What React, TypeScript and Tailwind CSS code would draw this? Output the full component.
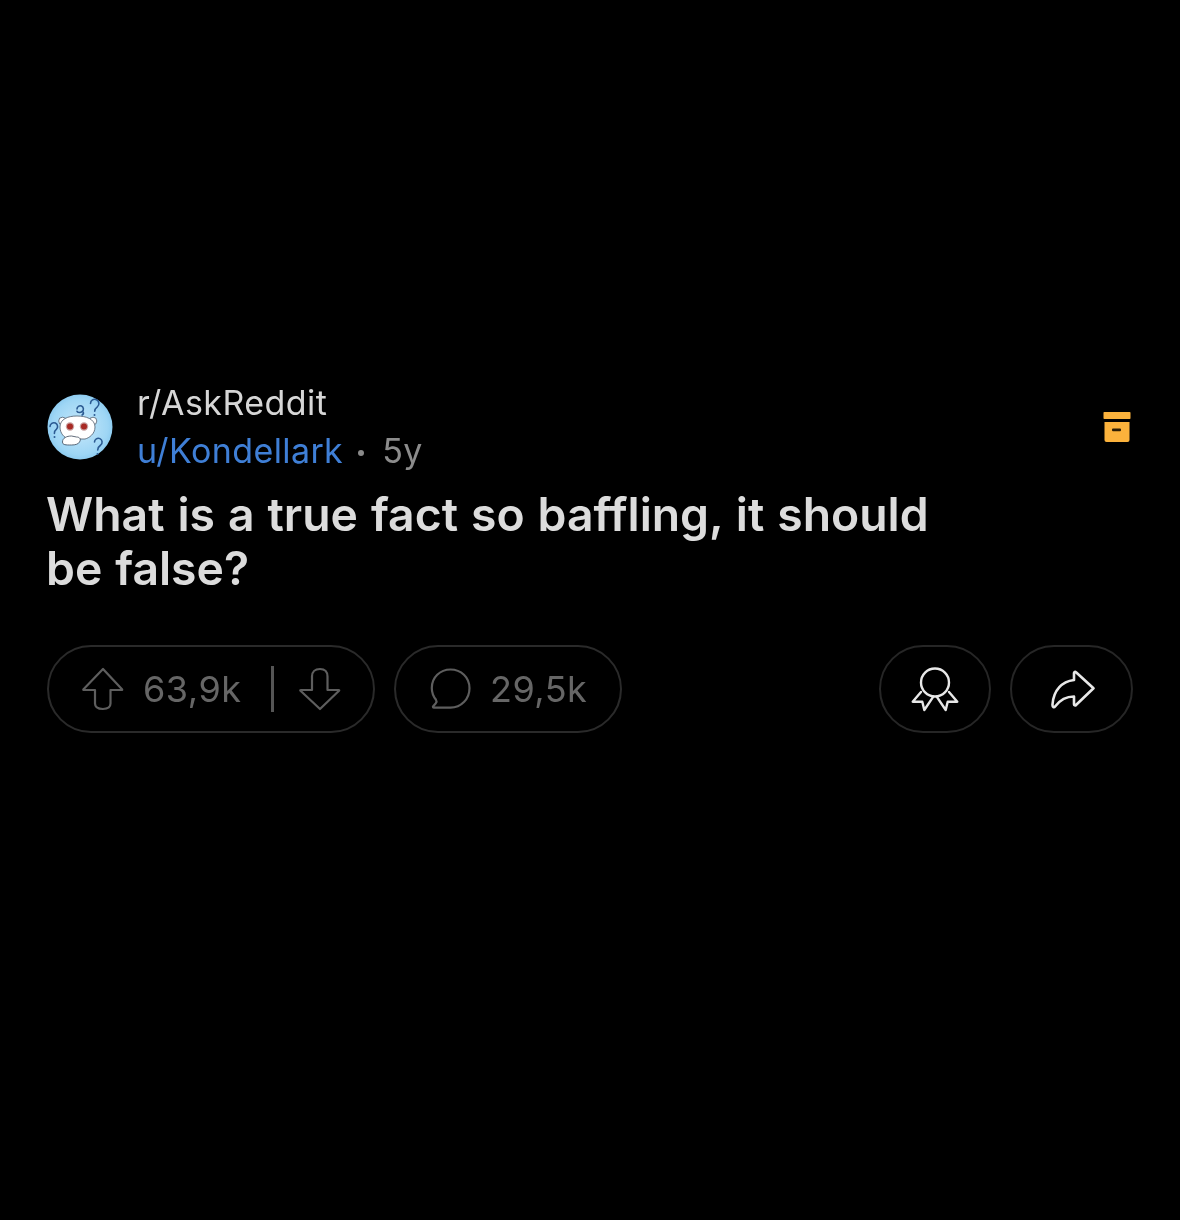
const stroke = "#5e5e5e";

function Avatar() {
  return (
    <svg width="66" height="66" viewBox="0 0 66 66" className="shrink-0">
      <defs>
        <radialGradient id="av" cx="50%" cy="50%" r="50%">
          <stop offset="0%" stopColor="#c8e8fa" />
          <stop offset="85%" stopColor="#9ed6f5" />
          <stop offset="100%" stopColor="#8fcdf1" />
        </radialGradient>
      </defs>
      <circle cx="33" cy="33" r="32.500" fill="url(#av)" />
      <g stroke="#3a4658" strokeWidth="0.700" fill="#fff">
        <circle cx="46" cy="27" r="3.800" />
        <circle cx="15.500" cy="27" r="3.800" />
        <path d="M13 33c0-8 8-11 17-11s18 3 18 11c0 7-6 11-10 12H22c-5-1-9-6-9-12z" />
      </g>
      <circle cx="23" cy="32.500" r="4.200" fill="#c9a0a0" />
      <circle cx="37" cy="32.500" r="4.200" fill="#c9a0a0" />
      <circle cx="23" cy="32.500" r="3" fill="#a82a24" />
      <circle cx="37" cy="32.500" r="3" fill="#a82a24" />
      <path d="M15.500 48c0-4 4-6 9-6 2 0 3 1 5 1 3 0 5 2 3 5-1 2-4 3-8 3-6 0-9 0-9-3z" fill="#fff" stroke="#3a4658" strokeWidth="0.800" />
      <g stroke="#2b5a92" strokeWidth="1.600" fill="none" strokeLinecap="round" strokeLinejoin="round">
        <path d="M3 32.500a3.800 3.800 0 1 1 6.300 2.900c-1.300 1-2.100 2.200-1.900 4" />
        <path d="M43.500 9.500a4.200 4.200 0 1 1 6.800 3.300c-1.600 1.200-2.600 2.400-2.600 4.500" />
        <path d="M30 15a3.200 3.200 0 1 1 5.300 2.400c-1.800 1.500-4.800 1.400-5.300-.2M36.200 18c.5 1.100.2 2.200-1.100 3" />
        <path d="M47.500 48a3.800 3.800 0 1 1 6.200 3c-1.600 1.200-3 3-3 5" />
      </g>
      <circle cx="7.500" cy="43" r="1" fill="#2b5a92" />
      <circle cx="47.500" cy="21" r="1" fill="#2b5a92" />
      <circle cx="50.500" cy="60" r="1" fill="#2b5a92" />
    </svg>
  );
}

function ArchiveIcon() {
  return (
    <svg width="28" height="32" viewBox="0 0 28 32" className="mr-[2px]">
      <rect x="0.500" y="1" width="27" height="7" rx="0.800" fill="#fbb23c" />
      <path d="M1.500 11h25v18a2 2 0 0 1-2 2h-21a2 2 0 0 1-2-2z" fill="#fbb23c" />
      <rect x="9" y="17.500" width="9" height="2.800" rx="1" fill="#2a1c05" />
    </svg>
  );
}

function UpArrow() {
  return (
    <svg width="42" height="44" viewBox="0 0 42 44" fill="none" stroke={stroke} strokeWidth="2.200" strokeLinejoin="round">
      <path d="M21 2 1.500 22.200c-.4.500-.1.800.4.800H13v13.500c0 3.200 2.600 5.500 8 5.500s7.500-2.300 7.500-5.500V23h11.100c.5 0 .8-.3.4-.8z" />
    </svg>
  );
}

function DownArrow() {
  return (
    <svg width="42" height="44" viewBox="0 0 42 44" fill="none" stroke={stroke} strokeWidth="2.200" strokeLinejoin="round">
      <path d="M21 42 1.500 23.800c-.4-.5-.1-.8.4-.8H13V9.500C13 5 16 2 21 2s7.500 3 7.500 7.500V23h11.100c.5 0 .8.300.4.800z" />
    </svg>
  );
}

function CommentIcon() {
  return (
    <svg width="42" height="42" viewBox="0 0 42 42" fill="none" stroke={stroke} strokeWidth="2.200" strokeLinejoin="round">
      <path d="M21.500 1.500C11 1.500 2.800 9.500 2.800 20c0 4.500 1.600 8.500 4.200 11.800.7 1 .6 2.300-.2 3.400l-2.600 3c-.6.700-.2 1.500.8 1.500h16.500c10.500 0 19-8.500 19-19.500s-8.500-18.700-19-18.700z" />
    </svg>
  );
}

function AwardIcon() {
  return (
    <svg width="48" height="46" viewBox="0 0 48 46" fill="none" stroke="#e8e8e8" strokeWidth="2.400" strokeLinejoin="round" strokeLinecap="round">
      <circle cx="24" cy="16.500" r="14" />
      <path d="M10 26 1.700 35.700l9.600 0L13.300 44l9-13.300" />
      <path d="M38 26l8.300 9.700-9.600 0L34.700 44l-9-13.300" />
    </svg>
  );
}

function ShareIcon() {
  return (
    <svg width="44" height="40" viewBox="0 0 44 40" className="ml-[2px] mt-[1px]" fill="none" stroke="#e8e8e8" strokeWidth="2.600" strokeLinejoin="round" strokeLinecap="round">
      <path d="M25 2.300c-.8-.8-2-.4-2 .8V10C11 11.500 2.500 20 1.500 34.500c-.2 3 1.500 3.500 2.800 1.800C9 30 15 26.500 23 26.500v7.700c0 1.300 1.200 1.600 2 .8L42.500 18.300z" />
    </svg>
  );
}

export default function App() {
  return (
    <div
      className="w-[1180px] h-[1220px] bg-black px-[47px] pt-[379px] overflow-hidden"
      style={{ fontFamily: "Inter, 'Liberation Sans', sans-serif" }}
    >
      <div className="blur-[0.4px]">
        <div className="flex items-center justify-between">
          <div className="flex items-center gap-[25px]">
            <Avatar />
            <div className="flex flex-col">
              <div className="text-[34px] leading-[48px] text-[#d6d6d6] tracking-[0.45px] -ml-[1px]">r/AskReddit</div>
              <div className="flex items-center text-[34px] leading-[48px] tracking-[0.4px] -ml-[1px]">
                <span className="text-[#3f7fd6]">u/Kondellark</span>
                <span className="w-[6px] h-[6px] rounded-full bg-[#8a8a8a] ml-[15px] mr-[18px] mt-[4px]" />
                <span className="text-[#8c8c8c]">5y</span>
              </div>
            </div>
          </div>
          <ArchiveIcon />
        </div>

        <h1 className="mt-[12px] w-[920px] text-[46.300px] leading-[54px] font-semibold text-[#dcdcdc] -ml-[1px] [font-variant-ligatures:none] [word-spacing:1.300px]">
          What is a true fact so baffling, it should be false?
        </h1>

        <div className="mt-[50px] flex items-center justify-between">
          <div className="flex items-center gap-[19px]">
            <div className="w-[328px] h-[88px] rounded-full border-2 border-[#2a2a2a] flex items-center pl-[33px]">
              <UpArrow />
              <span className="ml-[19px] text-[36px] tracking-[0.5px] text-[#666666]">63,9k</span>
              <span className="ml-[29.500px] w-[3px] h-[46px] bg-[#555555]" />
              <span className="ml-[25px] flex">
                <DownArrow />
              </span>
            </div>
            <div className="w-[228px] h-[88px] rounded-full border-2 border-[#2a2a2a] flex items-center pl-[33px]">
              <CommentIcon />
              <span className="ml-[19px] text-[36px] tracking-[0.5px] text-[#666666]">29,5k</span>
            </div>
          </div>
          <div className="flex items-center gap-[19px]">
            <div className="w-[112px] h-[88px] rounded-full border-2 border-[#262626] flex items-center justify-center">
              <AwardIcon />
            </div>
            <div className="w-[123px] h-[88px] rounded-full border-2 border-[#262626] flex items-center justify-center">
              <ShareIcon />
            </div>
          </div>
        </div>
      </div>
    </div>
  );
}
